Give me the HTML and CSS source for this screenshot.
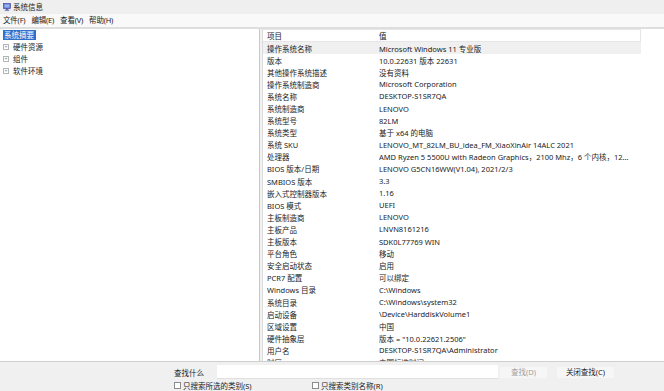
FILE: index.html
```html
<!DOCTYPE html>
<html lang="zh-CN">
<head>
<meta charset="utf-8">
<title>系统信息</title>
<link rel="stylesheet" href="styles.css">
</head>
<body>
<div class="window">
  <div class="titlebar">
    <svg class="app-icon" width="8" height="8" viewBox="0 0 8 8">
      <rect x="0.5" y="0.5" width="7" height="5" fill="#5b5fc7" stroke="#3a3f9e" stroke-width="0.6"/>
      <rect x="1.4" y="1.3" width="5.2" height="3.3" fill="#8fb4f0"/>
      <rect x="3.2" y="5.5" width="1.6" height="1.2" fill="#3a3f9e"/>
      <rect x="1.8" y="6.7" width="4.4" height="0.9" fill="#3a3f9e"/>
    </svg>
    <span class="title-text">系统信息</span>
  </div>
  <div class="menubar">
    <span class="menu-item">文件(F)</span>
    <span class="menu-item">编辑(E)</span>
    <span class="menu-item">查看(V)</span>
    <span class="menu-item">帮助(H)</span>
  </div>
  <div class="content">
    <div class="tree-pane">
      <div class="tree-item"><span class="tree-label selected">系统摘要</span></div>
      <div class="tree-item"><span class="expander">+</span><span class="tree-label">硬件资源</span></div>
      <div class="tree-item"><span class="expander">+</span><span class="tree-label">组件</span></div>
      <div class="tree-item"><span class="expander">+</span><span class="tree-label">软件环境</span></div>
    </div>
    <div class="splitter"></div>
    <div class="list-pane">
      <div class="list-inner">
        <div class="row header"><span class="c1">项目</span><span class="c2">值</span></div>
        <div class="row hl"><span class="c1">操作系统名称</span><span class="c2">Microsoft Windows 11 专业版</span></div>
        <div class="row"><span class="c1">版本</span><span class="c2">10.0.22631 版本 22631</span></div>
        <div class="row"><span class="c1">其他操作系统描述</span><span class="c2">没有资料</span></div>
        <div class="row"><span class="c1">操作系统制造商</span><span class="c2">Microsoft Corporation</span></div>
        <div class="row"><span class="c1">系统名称</span><span class="c2">DESKTOP-S1SR7QA</span></div>
        <div class="row"><span class="c1">系统制造商</span><span class="c2">LENOVO</span></div>
        <div class="row"><span class="c1">系统型号</span><span class="c2">82LM</span></div>
        <div class="row"><span class="c1">系统类型</span><span class="c2">基于 x64 的电脑</span></div>
        <div class="row"><span class="c1">系统 SKU</span><span class="c2">LENOVO_MT_82LM_BU_idea_FM_XiaoXinAir 14ALC 2021</span></div>
        <div class="row"><span class="c1">处理器</span><span class="c2">AMD Ryzen 5 5500U with Radeon Graphics，2100 Mhz，6 个内核，12...</span></div>
        <div class="row"><span class="c1">BIOS 版本/日期</span><span class="c2">LENOVO G5CN16WW(V1.04), 2021/2/3</span></div>
        <div class="row"><span class="c1">SMBIOS 版本</span><span class="c2">3.3</span></div>
        <div class="row"><span class="c1">嵌入式控制器版本</span><span class="c2">1.16</span></div>
        <div class="row"><span class="c1">BIOS 模式</span><span class="c2">UEFI</span></div>
        <div class="row"><span class="c1">主板制造商</span><span class="c2">LENOVO</span></div>
        <div class="row"><span class="c1">主板产品</span><span class="c2">LNVN8161216</span></div>
        <div class="row"><span class="c1">主板版本</span><span class="c2">SDK0L77769 WIN</span></div>
        <div class="row"><span class="c1">平台角色</span><span class="c2">移动</span></div>
        <div class="row"><span class="c1">安全启动状态</span><span class="c2">启用</span></div>
        <div class="row"><span class="c1">PCR7 配置</span><span class="c2">可以绑定</span></div>
        <div class="row"><span class="c1">Windows 目录</span><span class="c2">C:\Windows</span></div>
        <div class="row"><span class="c1">系统目录</span><span class="c2">C:\Windows\system32</span></div>
        <div class="row"><span class="c1">启动设备</span><span class="c2">\Device\HarddiskVolume1</span></div>
        <div class="row"><span class="c1">区域设置</span><span class="c2">中国</span></div>
        <div class="row"><span class="c1">硬件抽象层</span><span class="c2">版本 = "10.0.22621.2506"</span></div>
        <div class="row"><span class="c1">用户名</span><span class="c2">DESKTOP-S1SR7QA\Administrator</span></div>
        <div class="row"><span class="c1">时区</span><span class="c2">中国标准时间</span></div>
      </div>
    </div>
  </div>
  <div class="findbar">
    <div class="find-row">
      <span class="find-label">查找什么</span>
      <span class="find-input"></span>
      <span class="btn disabled">查找(D)</span>
      <span class="btn">关闭查找(C)</span>
    </div>
    <div class="check-row">
      <span class="check"><span class="box"></span>只搜索所选的类别(S)</span>
      <span class="check second"><span class="box"></span>只搜索类别名称(R)</span>
    </div>
  </div>
</div>
</body>
</html>
```
FILE: styles.css
```css
html, body {
  margin: 0;
  padding: 0;
  background: #ffffff;
}
body {
  font-family: "Noto Sans", "Noto Sans CJK SC", sans-serif;
  font-size: 7.5px;
  color: #222222;
}
.window {
  width: 664px;
  height: 391px;
  display: flex;
  flex-direction: column;
  overflow: hidden;
}
.titlebar {
  height: 14px;
  background: #efefef;
  display: flex;
  align-items: center;
  padding-left: 3px;
  gap: 2px;
  flex: none;
}
.title-text {
  line-height: 14px;
}
.menubar {
  height: 13px;
  background: #f9f9f9;
  border-bottom: 2px solid #dedede;
  display: flex;
  align-items: center;
  padding-left: 3px;
  gap: 6px;
  flex: none;
}
.menu-item {
  line-height: 13px;
  letter-spacing: -0.2px;
}
.content {
  height: 332px;
  display: flex;
  flex: none;
  border-bottom: 1px solid #cfcfcf;
}
.tree-pane {
  width: 259px;
  border-right: 1px solid #c8c8c8;
  background: #ffffff;
  flex: none;
}
.tree-item {
  height: 12px;
  display: flex;
  align-items: center;
  padding-left: 3px;
}
.tree-label {
  line-height: 10px;
  padding: 0 1px;
}
.tree-label.selected {
  background: #2f6fcc;
  color: #ffffff;
  padding: 0 2px 0 1px;
}
.expander {
  width: 4px;
  height: 4px;
  border: 1px solid #b5b5b5;
  color: #8a8a8a;
  font-size: 5px;
  line-height: 4px;
  text-align: center;
  margin-right: 3px;
  box-sizing: content-box;
  overflow: hidden;
}
.splitter {
  width: 2px;
  background: #f2f2f2;
  flex: none;
}
.list-pane {
  flex: 1;
  border-left: 1px solid #dcdcdc;
  overflow: hidden;
}
.list-inner {
  width: 378px;
}
.row {
  height: 12.1px;
  display: flex;
  align-items: center;
  white-space: nowrap;
}
.row.header {
  height: 13px;
  border: 1px solid #e6e6e6;
  border-left: none;
  box-sizing: border-box;
}
.row.hl {
  background: #f0f0f0;
}
.c1 {
  width: 112px;
  padding-left: 4px;
  flex: none;
  overflow: hidden;
}
.c2 {
  flex: 1;
  overflow: hidden;
}
.findbar {
  flex: 1;
  background: #f0f0f0;
  padding-left: 174px;
  padding-top: 3px;
}
.find-row {
  display: flex;
  align-items: center;
  height: 14px;
}
.find-label {
  width: 43px;
}
.find-input {
  width: 281px;
  height: 13px;
  background: #ffffff;
  border-bottom: 1px solid #e0e0e0;
}
.btn {
  height: 11px;
  line-height: 11px;
  background: #f6f6f6;
  text-align: center;
  margin-left: 2px;
  width: 47px;
}
.btn + .btn {
  margin-left: 10px;
  width: 57px;
}
.btn.disabled {
  color: #a0a0a0;
}
.check-row {
  display: flex;
  align-items: center;
  height: 12px;
  margin-top: 0;
}
.check {
  display: flex;
  align-items: center;
  gap: 2px;
  width: 138px;
}
.box {
  width: 5px;
  height: 5px;
  border: 1px solid #8c8c8c;
  background: #ffffff;
}
```
